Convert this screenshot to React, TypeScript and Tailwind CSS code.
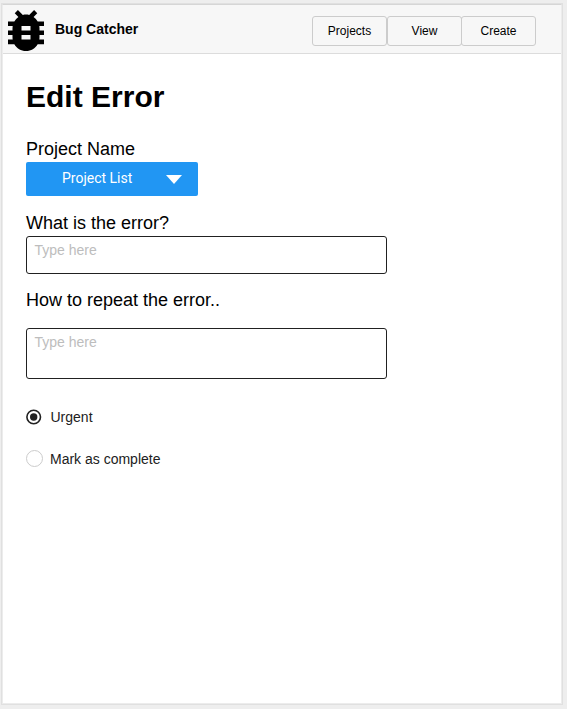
function BugIcon() {
  return (
    <svg className="mt-[5px] ml-[5px] h-[41px] w-9 shrink-0" viewBox="4 3 16 18" preserveAspectRatio="none" fill="#000">
      <path d="M20 8h-2.81c-.45-.78-1.07-1.45-1.82-1.96L17 4.41 15.59 3l-2.17 2.17C12.96 5.06 12.49 5 12 5c-.49 0-.96.06-1.41.17L8.41 3 7 4.41l1.62 1.63C7.88 6.55 7.26 7.22 6.81 8H4v2h2.09c-.05.33-.09.66-.09 1v1H4v2h2v1c0 .34.04.67.09 1H4v2h2.81c1.04 1.79 2.97 3 5.19 3s4.15-1.21 5.19-3H20v-2h-2.09c.05-.33.09-.66.09-1v-1h2v-2h-2v-1c0-.34-.04-.67-.09-1H20V8zm-6 8h-4v-2h4v2zm0-4h-4v-2h4v2z" />
    </svg>
  );
}

function Header() {
  return (
    <header className="flex h-[49px] border-b border-[#dcdcdc] bg-[#f7f7f7]">
      <BugIcon />
      <span className="mt-[14px] ml-[11px] text-[14px] leading-5 font-bold">Bug Catcher</span>
      <nav className="mt-[11px] mr-[25px] ml-auto flex text-[12px] leading-[28px]">
        <button className="h-[30px] w-[75px] rounded-[3px] border border-[#cccccc]">Projects</button>
        <button className="h-[30px] w-[75px] rounded-[3px] border border-[#cccccc]">View</button>
        <button className="-ml-px h-[30px] w-[75px] rounded-[3px] border border-[#cccccc]">Create</button>
      </nav>
    </header>
  );
}

export default function App() {
  return (
    <div className="h-[709px] w-[567px] bg-[#eeeeee] pt-[3px] pl-px font-['Liberation_Sans',Arial,sans-serif] text-black">
      <div className="h-[702px] w-[562px] border border-[#e0e0e0] bg-white">
        <div className="h-[700px] border border-t-[#d6d6d6] border-r-[#ececec] border-b-[#ececec] border-l-[#ececec]">
          <Header />
          <main className="flex flex-col items-start pl-[23px]">
            <h1 className="mt-[24px] text-[30px] leading-[38px] font-bold tracking-[0.02px]">Edit Error</h1>
            <label className="mt-[21px] mb-px text-[18px] leading-6">Project Name</label>
            <button className="flex h-[34px] w-[172px] items-center rounded-[2px] bg-[#2196f3] text-white">
              <span className="ml-9 w-[104px] pb-[2px] text-left font-[Roboto,sans-serif] text-[14px] leading-5">Project List</span>
              <svg className="mt-px h-[9px] w-4" viewBox="0 0 16 9" fill="currentColor"><path d="M0 0h16L8 9z" /></svg>
            </button>
            <label className="mt-[15px] text-[18px] leading-6">What is the error?</label>
            <textarea className="mt-px block h-[38px] w-[361px] resize-none rounded-[3px] border border-[#212121] px-[7.5px] py-[3px] text-[14px] leading-5 placeholder:text-[#bdbdbd]" placeholder="Type here" />
            <label className="mt-[14px] text-[18px] leading-6">How to repeat the error..</label>
            <textarea className="mt-4 block h-[51px] w-[361px] resize-none rounded-[3px] border border-[#212121] px-[7.5px] py-[3px] text-[14px] leading-5 placeholder:text-[#bdbdbd]" placeholder="Type here" />
            <label className="mt-7 flex items-center text-[14px] leading-5 text-[#212121]">
              <svg className="mr-[8.5px] size-4" viewBox="0 0 16 16"><circle cx="7.7" cy="8" r="6.8" fill="none" stroke="#212121" strokeWidth="1.6" /><circle cx="7.7" cy="8" r="3.7" fill="#212121" /></svg>
              Urgent
            </label>
            <label className="mt-[22px] flex items-start text-[14px] leading-5 text-[#212121]">
              <span className="mt-px mr-[7px] size-[17px] rounded-full border border-[#cccccc]" />
              Mark as complete
            </label>
          </main>
        </div>
      </div>
    </div>
  );
}
